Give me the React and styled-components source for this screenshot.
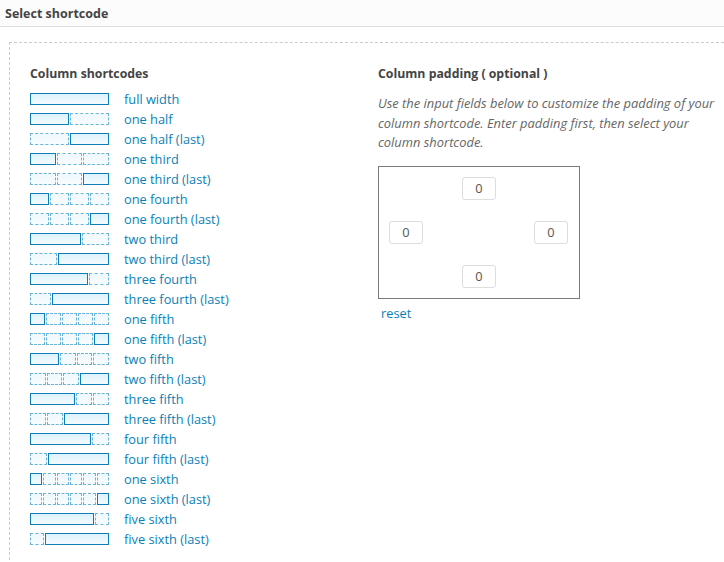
import React from 'react'
import styled, { createGlobalStyle } from 'styled-components'

const GlobalStyle = createGlobalStyle`
  html, body {
    margin: 0;
    padding: 0;
    background: #fff;
    font-family: "Open Sans", "Noto Sans", sans-serif;
    font-size: 13px;
    color: #444;
  }
`

const Header = styled.div`
  height: 26px;
  background: #fcfcfc;
  border-bottom: 1px solid #dddddd;
  display: flex;
  align-items: center;
  padding: 0 5px;
  font-weight: 700;
  font-size: 12.5px;
  color: #444;
`

const Frame = styled.div`
  margin: 15px 0 0 9px;
  border-top: 1px dashed #cccccc;
  border-left: 1px dashed #cccccc;
  padding: 22px 0 0 20px;
  display: flex;
  min-height: 500px;
`

const LeftCol = styled.div`
  width: 348px;
`

const RightCol = styled.div`
  flex: 1;
  padding-right: 8px;
`

const Heading = styled.h3`
  margin: 0 0 ${(p) => p.$gap || 5}px;
  font-size: 12.3px;
  font-weight: 700;
  color: #444;
  line-height: 18px;
`

const Row = styled.div`
  display: flex;
  align-items: center;
  height: 20px;
`

const Bar = styled.div`
  display: flex;
  gap: 1px;
  width: 79px;
  height: 12px;
  margin-right: 15px;
`

const Seg = styled.div`
  flex: ${(p) => p.$units} 1 0;
  box-sizing: border-box;
  border: 1px ${(p) => (p.$solid ? 'solid #0c7db5' : 'dashed #6cb3d6')};
  background: ${(p) =>
    p.$solid
      ? 'linear-gradient(to bottom, #dcf2fc, #f3fbfe)'
      : 'linear-gradient(to bottom, #eef8fd, #f8fcfe)'};
`

const Label = styled.a`
  color: #0a7fb6;
  text-decoration: none;
  font-size: 12.8px;
  cursor: pointer;
`

const Note = styled.p`
  margin: 11px 0 13px;
  font-style: italic;
  color: #666;
  font-size: 12.9px;
  line-height: 19.5px;
`

const PadBox = styled.div`
  width: 202px;
  height: 133px;
  box-sizing: border-box;
  border: 1px solid #7a7a7a;
  padding: 10px;
  display: flex;
  flex-direction: column;
  justify-content: space-between;
`

const PadRow = styled.div`
  display: flex;
  justify-content: ${(p) => (p.$spread ? 'space-between' : 'center')};
  padding-right: ${(p) => (p.$spread ? '1px' : '0')};
`

const PadInput = styled.input`
  width: 34px;
  height: 23px;
  box-sizing: border-box;
  border: 1px solid #dddddd;
  border-radius: 3px;
  text-align: center;
  font-family: "Open Sans", "Noto Sans", sans-serif;
  font-size: 12.8px;
  color: #555;
  padding: 0;
  outline: none;
`

const Reset = styled.a`
  display: inline-block;
  margin: 5px 0 0 3px;
  color: #0a7fb6;
  font-size: 12.8px;
  cursor: pointer;
`

// each row: [label, [[units, solid], ...]]
const rows = [
  ['full width', [[1, true]]],
  ['one half', [[1, true], [1, false]]],
  ['one half (last)', [[1, false], [1, true]]],
  ['one third', [[1, true], [1, false], [1, false]]],
  ['one third (last)', [[1, false], [1, false], [1, true]]],
  ['one fourth', [[1, true], [1, false], [1, false], [1, false]]],
  ['one fourth (last)', [[1, false], [1, false], [1, false], [1, true]]],
  ['two third', [[2, true], [1, false]]],
  ['two third (last)', [[1, false], [2, true]]],
  ['three fourth', [[3, true], [1, false]]],
  ['three fourth (last)', [[1, false], [3, true]]],
  ['one fifth', [[1, true], [1, false], [1, false], [1, false], [1, false]]],
  ['one fifth (last)', [[1, false], [1, false], [1, false], [1, false], [1, true]]],
  ['two fifth', [[2, true], [1, false], [1, false], [1, false]]],
  ['two fifth (last)', [[1, false], [1, false], [1, false], [2, true]]],
  ['three fifth', [[3, true], [1, false], [1, false]]],
  ['three fifth (last)', [[1, false], [1, false], [3, true]]],
  ['four fifth', [[4, true], [1, false]]],
  ['four fifth (last)', [[1, false], [4, true]]],
  ['one sixth', [[1, true], [1, false], [1, false], [1, false], [1, false], [1, false]]],
  ['one sixth (last)', [[1, false], [1, false], [1, false], [1, false], [1, false], [1, true]]],
  ['five sixth', [[5, true], [1, false]]],
  ['five sixth (last)', [[1, false], [5, true]]],
]

const App = () => {
  return (
    <>
      <GlobalStyle />
      <Header>Select shortcode</Header>
      <Frame>
        <LeftCol>
          <Heading $gap={6}>Column shortcodes</Heading>
          {rows.map(([label, segs]) => (
            <Row key={label}>
              <Bar>
                {segs.map(([units, solid], i) => (
                  <Seg key={i} $units={units} $solid={solid} />
                ))}
              </Bar>
              <Label>{label}</Label>
            </Row>
          ))}
        </LeftCol>
        <RightCol>
          <Heading>Column padding ( optional )</Heading>
          <Note>
            Use the input fields below to customize the padding of your column shortcode. Enter
            padding first, then select your column shortcode.
          </Note>
          <PadBox>
            <PadRow>
              <PadInput defaultValue="0" />
            </PadRow>
            <PadRow $spread>
              <PadInput defaultValue="0" />
              <PadInput defaultValue="0" />
            </PadRow>
            <PadRow>
              <PadInput defaultValue="0" />
            </PadRow>
          </PadBox>
          <Reset>reset</Reset>
        </RightCol>
      </Frame>
    </>
  )
}

export default App
